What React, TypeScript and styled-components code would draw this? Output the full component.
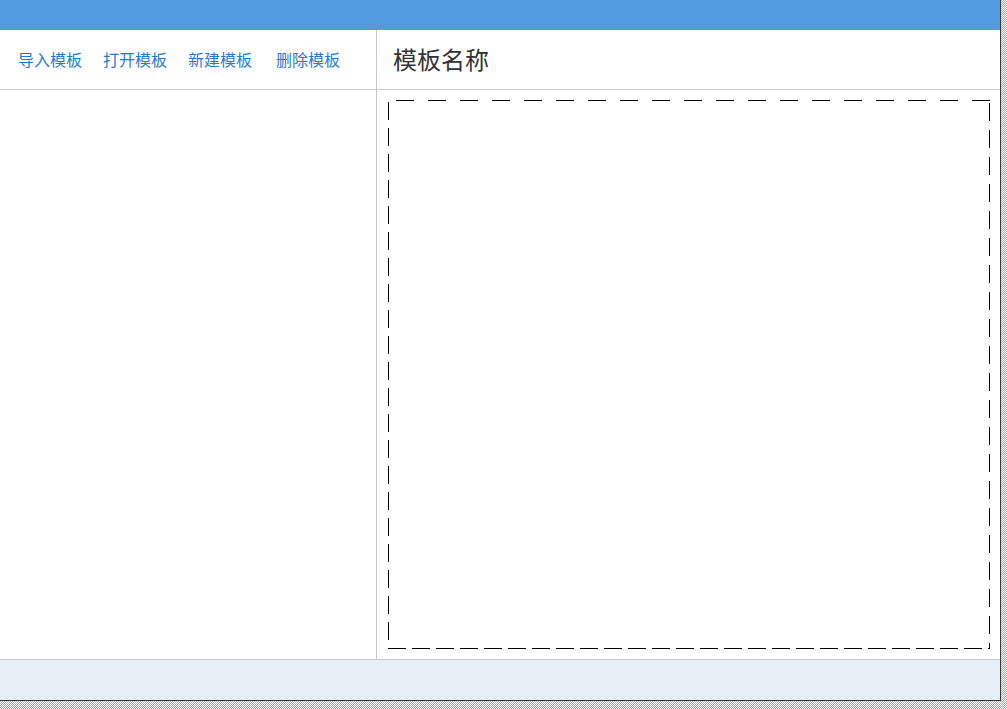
import styled, { createGlobalStyle } from 'styled-components';

const GlobalStyle = createGlobalStyle`
  html, body {
    margin: 0;
    padding: 0;
  }
  body {
    min-height: 709px;
    background: repeating-conic-gradient(#a8a8a8 0 25%, #ffffff 0 50%) 0 0 / 2px 2px;
    font-family: "Noto Sans CJK SC", "Noto Sans", sans-serif;
  }
`;

const menus = ['导入模板', '打开模板', '新建模板', '删除模板'];

const App = () => {
  return (
    <>
      <GlobalStyle />
      <Window>
        <TopBar />
        <Main>
          <LeftPanel>
            <PanelHeader>
              <MenuList>
                {menus.map((m, i) => (
                  <MenuLink key={m} $last={i === menus.length - 1}>
                    {m}
                  </MenuLink>
                ))}
              </MenuList>
            </PanelHeader>
          </LeftPanel>
          <RightPanel>
            <PanelHeader>
              <Title>模板名称</Title>
            </PanelHeader>
            <Canvas>
              <DashedBox />
            </Canvas>
          </RightPanel>
        </Main>
        <Footer />
      </Window>
    </>
  );
};

const Window = styled.div`
  width: 1000px;
  height: 700px;
  display: flex;
  flex-direction: column;
  background: #fff;
  border-right: 1px solid #3a3a3a;
  border-bottom: 1px solid #3a3a3a;
`;

const TopBar = styled.div`
  height: 30px;
  flex-shrink: 0;
  background-color: #519bde;
`;

const Main = styled.div`
  flex: 1;
  display: flex;
  min-height: 0;
`;

const LeftPanel = styled.div`
  width: 376px;
  flex-shrink: 0;
  border-right: 1px solid #c8c8c8;
`;

const RightPanel = styled.div`
  flex: 1;
  display: flex;
  flex-direction: column;
`;

const PanelHeader = styled.div`
  height: 57px;
  padding-bottom: 2px;
  flex-shrink: 0;
  display: flex;
  align-items: center;
  border-bottom: 1px solid #c8c8c8;
`;

const MenuList = styled.div`
  display: flex;
  padding-left: 18px;
`;

const MenuLink = styled.a<{ $last?: boolean }>`
  font-size: 16px;
  color: #1f7bd2;
  cursor: pointer;
  margin-right: 21px;
  margin-left: ${({ $last }) => ($last ? '3px' : '0')};
`;

const Title = styled.div`
  padding-left: 16px;
  font-size: 24px;
  color: #333;
`;

const Canvas = styled.div`
  flex: 1;
  padding: 10px 10px 10px 10px;
  display: flex;
`;

const DashedBox = styled.div`
  flex: 1;
  margin-left: 1px;
  background:
    repeating-linear-gradient(90deg, transparent 0 8px, #000 8px 26px, transparent 26px 32px) top left / 100% 1px no-repeat,
    repeating-linear-gradient(90deg, #000 0 18px, transparent 18px 24px) bottom left / 100% 1px no-repeat,
    repeating-linear-gradient(180deg, transparent 0 2px, #000 2px 20px, transparent 20px 26px) top left / 1px 100% no-repeat,
    repeating-linear-gradient(180deg, transparent 0 3px, #000 3px 21px, transparent 21px 27px) top right / 1px 100% no-repeat;
`;

const Footer = styled.div`
  height: 40px;
  flex-shrink: 0;
  background-color: #e6eef6;
  border-top: 1px solid #c8c8c8;
`;

export default App;
